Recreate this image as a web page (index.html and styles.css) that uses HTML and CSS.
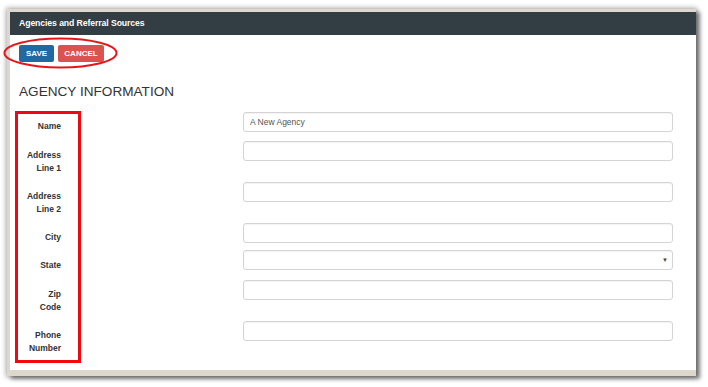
FILE: index.html
```html
<!DOCTYPE html>
<html>
<head>
<meta charset="utf-8">
<link rel="stylesheet" href="styles.css">
</head>
<body>
<div class="frame">
  <div class="header">Agencies and Referral Sources</div>
  <div class="content">
    <div class="actions">
      <button class="btn btn-save">SAVE</button>
      <button class="btn btn-cancel">CANCEL</button>
    </div>
    <h1 class="title">AGENCY INFORMATION</h1>
    <div class="form">
      <div class="row single"><label class="lbl">Name</label><div class="field"><input class="inp" value="A New Agency"></div></div>
      <div class="row double"><label class="lbl">Address<br>Line 1</label><div class="field"><input class="inp"></div></div>
      <div class="row double"><label class="lbl">Address<br>Line 2</label><div class="field"><input class="inp"></div></div>
      <div class="row single short"><label class="lbl">City</label><div class="field"><input class="inp"></div></div>
      <div class="row single"><label class="lbl">State</label><div class="field"><div class="inp select"><span class="arrow">▼</span></div></div></div>
      <div class="row double"><label class="lbl">Zip<br>Code</label><div class="field"><input class="inp"></div></div>
      <div class="row double"><label class="lbl">Phone<br>Number</label><div class="field"><input class="inp"></div></div>
    </div>
  </div>
</div>
<svg class="ann-ellipse" width="120" height="34" viewBox="0 0 120 34"><ellipse cx="60.5" cy="16" rx="56" ry="14.5" fill="none" stroke="#e8141a" stroke-width="2"/></svg>
<div class="ann-rect"></div>
</body>
</html>
```
FILE: styles.css
```css
html, body { margin: 0; padding: 0; background: #fff; }
body { font-family: "Liberation Sans", Arial, sans-serif; position: relative; width: 708px; height: 387px; overflow: hidden; }
.frame {
  margin: 9px 0 0 7px;
  width: 686px;
  height: 358px;
  border-top: 3px solid #ddd7ce;
  border-left: 3px solid #ddd7ce;
  border-bottom: 6px solid #ddd7ce;
  background: #fff;
  box-shadow: 0 0 5px 1px rgba(0,0,0,0.35), 4px 3px 4px rgba(0,0,0,0.45);
  display: flex;
  flex-direction: column;
}
.header {
  background: #323e44;
  height: 23px;
  color: #fff;
  font-size: 8.7px;
  font-weight: bold;
  letter-spacing: -0.1px;
  line-height: 22px;
  padding-left: 9px;
}
.content { padding: 10px 0 0 9px; }
.actions { display: flex; gap: 4px; height: 17px; }
.btn {
  border: 0; margin: 0; padding: 0; height: 17px;
  font-family: "Liberation Sans", Arial, sans-serif;
  font-size: 8px; font-weight: bold; color: #fff; border-radius: 2px;
}
.btn-save { background: #2069a5; width: 35px; }
.btn-cancel { background: #d9534f; width: 46px; }
.title {
  margin: 22px 0 0 0;
  font-size: 13.6px; font-weight: normal; color: #333;
  line-height: 16px;
}
.form { margin-top: 11px; }
.row { display: flex; }
.row.single { height: 29px; }
.row.single.short { height: 28px; }
.row.double { height: 41px; }
.lbl {
  width: 42px; text-align: right;
  font-size: 8.5px; font-weight: bold; color: #333;
  line-height: 12.5px; padding-top: 9px;
}
.field { margin-left: 182px; }
.inp {
  box-sizing: border-box; width: 430px; height: 20px;
  border: 1px solid #d4d4d4; border-radius: 3px;
  box-shadow: inset 0 1px 1px rgba(0,0,0,0.05);
  font-family: "Liberation Sans", Arial, sans-serif;
  font-size: 8.5px; color: #555; padding: 0 6px; margin: 0; outline: none;
  background: #fff;
}
.select { display: flex; align-items: center; justify-content: flex-end; padding-right: 4px; }
.arrow { font-size: 6px; color: #444; }
.ann-ellipse { position: absolute; left: 0; top: 37px; }
.ann-rect {
  position: absolute; left: 15px; top: 111px; width: 60px; height: 246px;
  border: 3px solid #f0070f;
}
```
